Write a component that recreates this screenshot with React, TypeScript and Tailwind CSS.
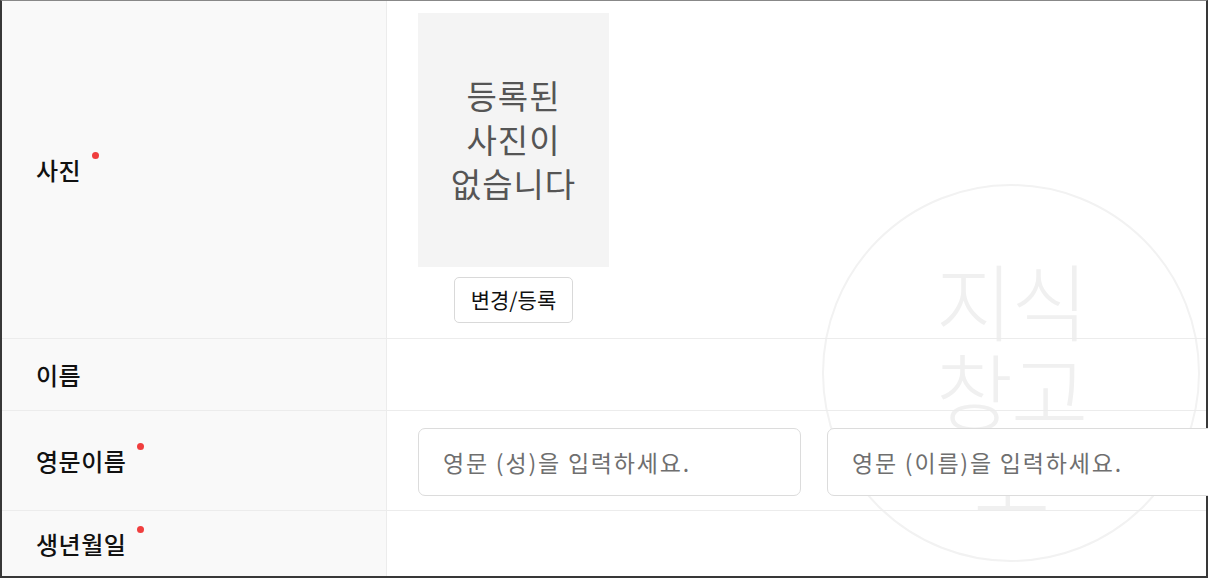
import React from "react";

const font = { fontFamily: '"Noto Sans CJK KR", "Noto Sans", sans-serif' };

const Row = ({
  label,
  required,
  className,
  children,
}: {
  label: string;
  required?: boolean;
  className: string;
  children?: React.ReactNode;
}) => (
  <div className={`flex border-b border-[#ececec] ${className}`}>
    <div className="w-[385px] shrink-0 flex items-center bg-[#f9f9f9] border-r border-[#ececec] pl-[34px]">
      <span className="relative text-[24px] tracking-[0.5px] font-medium text-[#111] leading-none">
        {label}
        {required && (
          <span className="absolute -right-[18px] -top-[6px] w-[7px] h-[7px] rounded-full bg-[#f03e3e]" />
        )}
      </span>
    </div>
    <div className="flex-1 min-w-0">{children}</div>
  </div>
);

const Watermark = () => (
  <div className="pointer-events-none absolute left-[822px] top-[184px] w-[378px] h-[378px] rounded-full border-2 border-[#f2f2f2]">
    <div className="flex flex-col items-center pt-[68px] text-[84px] font-light leading-[90px] text-[#f0f0f0] tracking-[-2px]">
      <span>지식</span>
      <span>창고</span>
      <span>고</span>
    </div>
  </div>
);

export default function App() {
  return (
    <div style={font} className="relative w-[1208px] h-[578px] overflow-hidden bg-white">
      <Watermark />
      <div className="relative h-full border-2 border-t border-[#383838] border-t-[#888] flex flex-col">
        <Row label="사진" required className="h-[338px]">
          <div className="pl-[31px] pt-[12px]">
            <div className="w-[191px] flex flex-col items-center">
              <div className="w-[191px] h-[254px] bg-[#f4f4f4] flex items-center justify-center">
                <p className="text-center text-[33px] tracking-[1px] leading-[44px] text-[#555] -mt-[2px]">
                  등록된
                  <br />
                  사진이
                  <br />
                  없습니다
                </p>
              </div>
              <button className="mt-[10px] w-[119px] h-[46px] border border-[#d9d9d9] rounded-[5px] bg-white text-[21px] text-[#111]">
                변경/등록
              </button>
            </div>
          </div>
        </Row>

        <Row label="이름" className="h-[72px]" />

        <Row label="영문이름" required className="h-[100px]">
          <div className="h-full flex items-center gap-[26px] pl-[31px] pt-[3px]">
            <input
              placeholder="영문 (성)을 입력하세요."
              className="w-[383px] h-[68px] shrink-0 border border-[#dcdcdc] rounded-[7px] bg-white px-[24px] text-[23px] tracking-[1.8px] placeholder:text-[#6f6f6f] outline-none"
            />
            <input
              placeholder="영문 (이름)을 입력하세요."
              className="w-[400px] h-[68px] shrink-0 border border-[#dcdcdc] rounded-[7px] bg-white px-[24px] text-[23px] tracking-[1.8px] placeholder:text-[#6f6f6f] outline-none"
            />
          </div>
        </Row>

        <Row label="생년월일" required className="flex-1 border-b-0" />
      </div>
    </div>
  );
}
